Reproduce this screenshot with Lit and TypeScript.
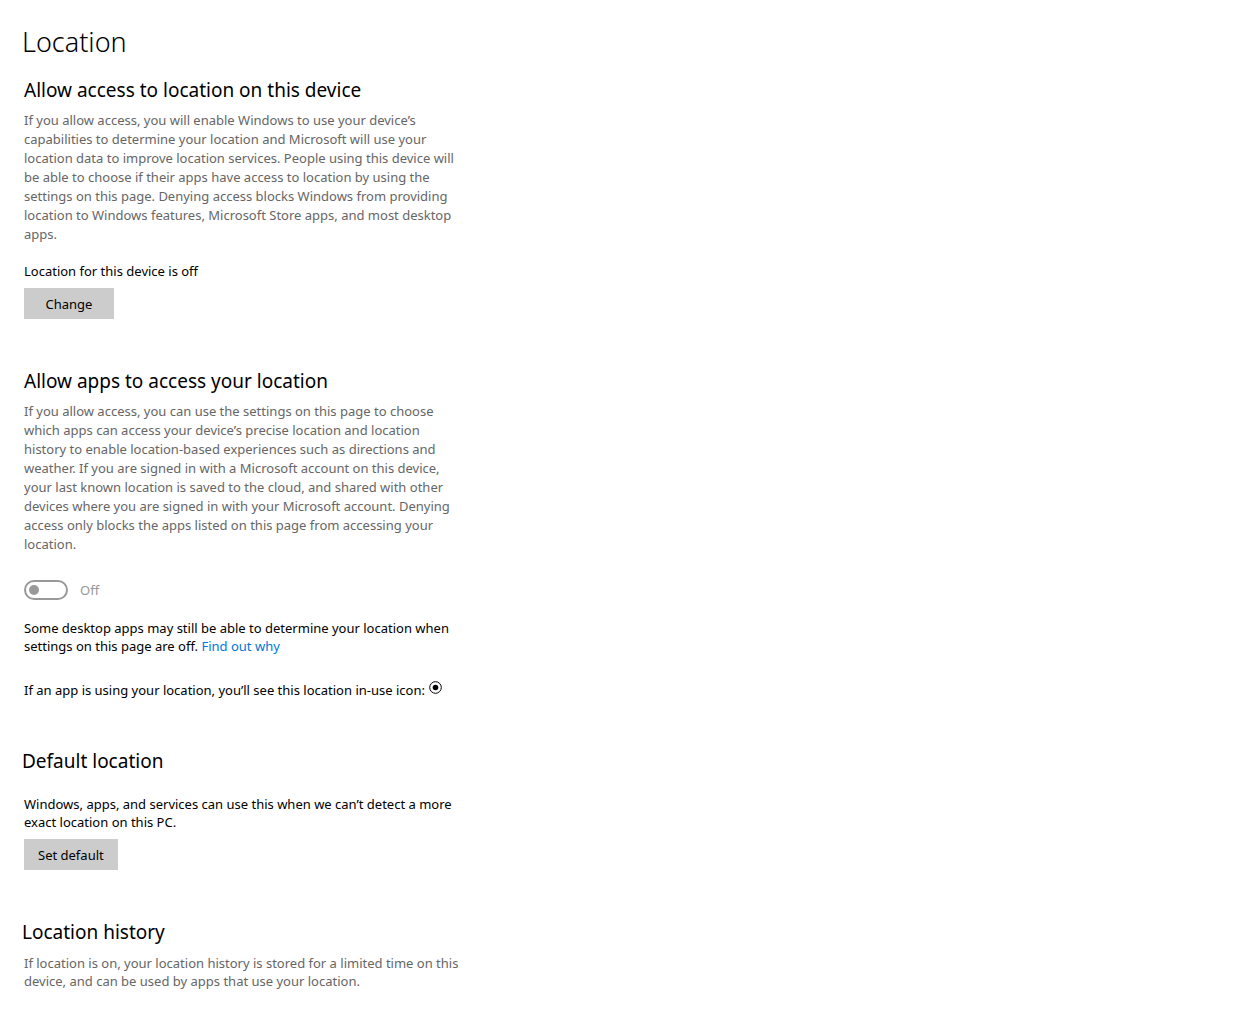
import { LitElement, html, css } from "lit";
import { customElement, state } from "lit/decorators.js";

@customElement("app-root")
export class AppRoot extends LitElement {
  @state() private appsAllowed = false;

  static styles = css`
    :host {
      display: block;
      background: #fff;
      color: #000;
      font-family: "Noto Sans", "Open Sans", sans-serif;
      font-size: 13px;
      line-height: 18px;
    }
    main {
      display: flex;
      flex-direction: column;
      gap: 48px;
      max-width: 438px;
      padding: 24px 24px 18px;
    }
    section {
      display: flex;
      flex-direction: column;
      align-items: flex-start;
    }
    h1,
    h2,
    p {
      margin: 0;
    }
    h1 {
      margin: 0 0 16px -2px;
      font-size: 27px;
      font-weight: 300;
      line-height: 36px;
    }
    h2 {
      margin-bottom: 7px;
      font-size: 19px;
      font-weight: 400;
      line-height: 28px;
    }
    h2.outdent {
      margin: 0 0 8px -2px;
    }
    .description {
      color: #666;
      line-height: 19px;
    }
    .brief {
      color: #666;
    }
    .status {
      margin-top: 18px;
    }
    .spaced {
      margin-top: 12px;
    }
    .button {
      margin: 8px 0 0;
      padding: 0 14px;
      min-width: 90px;
      height: 31px;
      border: 0;
      background: #ccc;
      color: #000;
      font: inherit;
    }
    .switch {
      display: flex;
      align-items: center;
      gap: 12px;
      margin: 26px 0 19px;
      color: #999;
    }
    .switch label {
      line-height: 20px;
    }
    .switch input {
      appearance: none;
      display: flex;
      align-items: center;
      box-sizing: border-box;
      width: 44px;
      height: 20px;
      margin: 0;
      padding: 0 3px;
      border: 2px solid #999;
      border-radius: 10px;
      background: #fff;
    }
    .switch input::before {
      content: "";
      width: 10px;
      height: 10px;
      border-radius: 50%;
      background: #999;
    }
    .switch input:checked {
      justify-content: flex-end;
    }
    a {
      color: #0078d7;
      text-decoration: none;
    }
    .in-use {
      display: flex;
      gap: 4px;
      margin-top: 26px;
    }
    .in-use svg {
      width: 13px;
      height: 13px;
    }
  `;

  render() {
    return html`
      <main>
        <section>
          <h1>Location</h1>
          <h2>Allow access to location on this device</h2>
          <p class="description">
            If you allow access, you will enable Windows to use your device’s
            capabilities to determine your location and Microsoft will use your
            location data to improve location services. People using this device
            will be able to choose if their apps have access to location by
            using the settings on this page. Denying access blocks Windows from
            providing location to Windows features, Microsoft Store apps, and
            most desktop apps.
          </p>
          <p class="status">Location for this device is off</p>
          <button class="button" type="button">Change</button>
        </section>

        <section>
          <h2>Allow apps to access your location</h2>
          <p class="description">
            If you allow access, you can use the settings on this page to choose
            which apps can access your device’s precise location and location
            history to enable location-based experiences such as directions and
            weather. If you are signed in with a Microsoft account on this
            device, your last known location is saved to the cloud, and shared
            with other devices where you are signed in with your Microsoft
            account. Denying access only blocks the apps listed on this page
            from accessing your location.
          </p>
          <div class="switch">
            <input
              id="apps"
              type="checkbox"
              role="switch"
              .checked=${this.appsAllowed}
              disabled
            />
            <label for="apps">${this.appsAllowed ? "On" : "Off"}</label>
          </div>
          <p>
            Some desktop apps may still be able to determine your location when
            settings on this page are off. <a href="#">Find out why</a>
          </p>
          <p class="in-use">
            <span
              >If an app is using your location, you’ll see this location in-use
              icon:</span
            >
            <svg viewBox="0 0 13 13" aria-hidden="true">
              <circle cx="6.5" cy="6.5" r="5.8" fill="none" stroke="#000" />
              <circle cx="6.5" cy="6.5" r="2.8" />
            </svg>
          </p>
        </section>

        <section>
          <h2 class="outdent">Default location</h2>
          <p class="spaced">
            Windows, apps, and services can use this when we can’t detect a more
            exact location on this PC.
          </p>
          <button class="button" type="button">Set default</button>
        </section>

        <section>
          <h2 class="outdent">Location history</h2>
          <p class="brief">
            If location is on, your location history is stored for a limited
            time on this device, and can be used by apps that use your location.
          </p>
        </section>
      </main>
    `;
  }
}
